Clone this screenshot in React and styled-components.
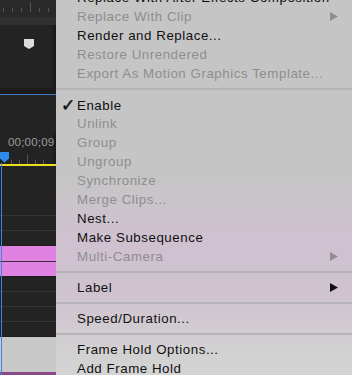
import React from "react";
import styled, { createGlobalStyle } from "styled-components";

const Global = createGlobalStyle`
  html, body { margin: 0; padding: 0; background: #232323; }
  body { font-family: "Liberation Sans", Arial, sans-serif; }
`;

const Screen = styled.div`
  display: flex;
  width: 352px;
  height: 375px;
  overflow: hidden;
`;

const Timeline = styled.div`
  width: 56px;
  flex: none;
  display: flex;
  flex-direction: column;
  background: #232323;
  position: relative;
  box-shadow: inset -2px 0 3px rgba(0, 0, 0, 0.35);
`;

const Ruler = styled.div`
  height: 17px;
  background: #2a2a2a;
  display: flex;
  align-items: flex-end;
  gap: 8px;
  padding: 0 0 5px 3px;
  box-sizing: border-box;
`;

const Tick = styled.span`
  width: 1px;
  height: ${({ $tall }) => ($tall ? "10px" : "4px")};
  background: #555;
`;

const Band = styled.div`
  height: 8px;
  background: #303030;
`;

const MarkerArea = styled.div`
  height: 63px;
  display: flex;
  justify-content: center;
  padding-top: 14px;
  padding-left: 1px;
  box-sizing: border-box;
`;

const Gap = styled.div`
  height: ${({ $h }) => $h}px;
  background: ${({ $c }) => $c || "#232323"};
`;

const Timecode = styled.div`
  height: 18px;
  padding: 0 0 0 8px;
  font-size: 11.5px;
  line-height: 18px;
  color: #9c9c9c;
  white-space: nowrap;
  letter-spacing: 0.2px;
`;

const PlayheadRow = styled.div`
  height: 12px;
  display: flex;
  align-items: flex-end;
  gap: 7px;
  padding-left: 11px;
  position: relative;
`;

const Playhead = styled.div`
  position: absolute;
  left: 0;
  top: 0;
  width: 9px;
  height: 11px;
  background: #2d8ceb;
  clip-path: polygon(0 0, 100% 0, 100% 60%, 50% 100%, 0 60%);
`;

const Yellow = styled.div`
  height: 2px;
  background: #e6df1f;
`;

const Track = styled.div`
  height: ${({ $h }) => $h}px;
  background: ${({ $c }) => $c || "#232323"};
  border-bottom: 1px solid ${({ $line }) => $line || "#343434"};
`;

const PlayLine = styled.div`
  position: absolute;
  left: 1px;
  top: 163px;
  bottom: 0;
  width: 1px;
  background: #3b86e0;
`;

const Menu = styled.div`
  flex: 1;
  background: linear-gradient(
    180deg,
    #c5c5c5 0%,
    #c6c5c6 50%,
    #cfc1d0 64%,
    #cfc3d0 80%,
    #d2d1d2 94%,
    #d4d4d4 100%
  );
  display: flex;
  flex-direction: column;
  margin-top: -12px;
`;

const Item = styled.div`
  height: 19px;
  flex: none;
  display: grid;
  grid-template-columns: 21px 1fr 22px;
  align-items: center;
  font-size: 13.3px;
  letter-spacing: 0.55px;
  color: ${({ $off }) => ($off ? "#8e8e8e" : "#111")};
  white-space: nowrap;
`;

const Check = styled.span`
  font-family: "DejaVu Sans", sans-serif;
  font-size: 17px;
  padding-left: 5px;
  color: #111;
  -webkit-text-stroke: 0.5px #111;
`;

const Arrow = styled.svg`
  width: 8px;
  height: 9px;
  fill: ${({ $off }) => ($off ? "#8e8e8e" : "#111")};
`;

const Sep = styled.div`
  height: 12px;
  flex: none;
  display: flex;
  align-items: center;
  &::after {
    content: "";
    flex: 1;
    height: 2px;
    background: #b3afb3;
    opacity: 0.85;
  }
`;

const items = [
  { t: "Replace With After Effects Composition" },
  { t: "Replace With Clip", off: true, sub: true },
  { t: "Render and Replace..." },
  { t: "Restore Unrendered", off: true },
  { t: "Export As Motion Graphics Template...", off: true },
  "sep",
  { t: "Enable", check: true },
  { t: "Unlink", off: true },
  { t: "Group", off: true },
  { t: "Ungroup", off: true },
  { t: "Synchronize", off: true },
  { t: "Merge Clips...", off: true },
  { t: "Nest..." },
  { t: "Make Subsequence" },
  { t: "Multi-Camera", off: true, sub: true },
  "sep",
  { t: "Label", sub: true },
  "sep",
  { t: "Speed/Duration..." },
  "sep",
  { t: "Frame Hold Options..." },
  { t: "Add Frame Hold" },
];

export default function App() {
  return (
    <>
      <Global />
      <Screen>
        <Timeline>
          <Ruler>
            {[0, 1, 2, 3, 4, 5].map((i) => (
              <Tick key={i} $tall={i === 3} />
            ))}
          </Ruler>
          <Band />
          <MarkerArea>
            <svg width="10" height="10" viewBox="0 0 10 10">
              <polygon points="0,0 10,0 10,7 5,10 0,7" fill="#dcdcdc" />
            </svg>
          </MarkerArea>
          <Gap $h={6} $c="#1b1b1b" />
          <Gap $h={1} $c="#3d79c4" />
          <Gap $h={38} />
          <Timecode>00;00;09</Timecode>
          <Gap $h={1} />
          <PlayheadRow>
            <Playhead />
            {[0, 1, 2, 3, 4].map((i) => (
              <Tick key={i} $tall={i === 2} />
            ))}
          </PlayheadRow>
          <Yellow />
          <Track $h={50} />
          <Track $h={14} />
          <Track $h={14} $line="#1e1e1e" />
          <Track $h={15} $c="#df82e2" $line="#3a2a3a" />
          <Track $h={14} $c="#df82e2" $line="#1e1e1e" />
          <Track $h={14} />
          <Track $h={14} />
          <Track $h={14} />
          <Track $h={14} $line="#1e1e1e" />
          <Track $h={34} $c="#c8c8c8" $line="#c8c8c8" />
          <Gap $h={3} $c="#8a4a8a" />
          <PlayLine />
        </Timeline>
        <Menu>
          {items.map((it, i) =>
            it === "sep" ? (
              <Sep key={i} />
            ) : (
              <Item key={i} $off={it.off}>
                {it.check ? <Check>✓</Check> : <span />}
                <span>{it.t}</span>
                {it.sub ? (
                  <Arrow $off={it.off} viewBox="0 0 8 9">
                    <polygon points="0,0 8,4.5 0,9" />
                  </Arrow>
                ) : (
                  <span />
                )}
              </Item>
            )
          )}
        </Menu>
      </Screen>
    </>
  );
}
